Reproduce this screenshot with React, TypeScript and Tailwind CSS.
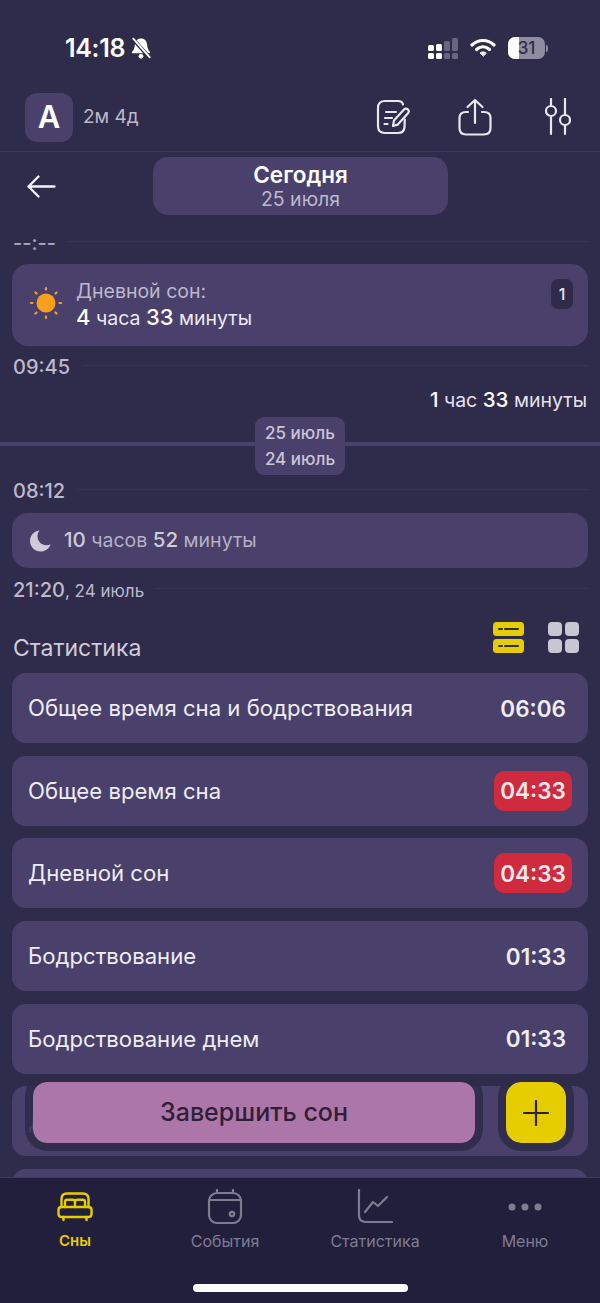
const stats = [
    { label: 'Общее время сна и бодрствования', value: '06:06', bad: false },
    { label: 'Общее время сна', value: '04:33', bad: true },
    { label: 'Дневной сон', value: '04:33', bad: true },
    { label: 'Бодрствование', value: '01:33', bad: false },
    { label: 'Бодрствование днем', value: '01:33', bad: false },
    { label: 'Дневная активность', value: '01:33', bad: false },
    { label: 'Ночной сон', value: '10:52', bad: false },
];

function TimeMark({ children, gap = 'ml-3' }: { children: React.ReactNode; gap?: string }) {
    return (
        <div className="flex items-center h-[22px] pl-[13px] pr-3">
            <span className="text-[20px] leading-[22px] font-medium text-[#bdb9cc] whitespace-nowrap">{children}</span>
            <div className={`flex-1 h-px mb-[3px] bg-[#383356] ${gap}`} />
        </div>
    );
}

function StatusBar() {
    return (
        <div className="h-[92px] shrink-0 flex items-center justify-between pl-[65px] pr-[52px] pt-[4px] text-white">
            <div className="flex items-center gap-[4px]">
                <span className="text-[25px] font-semibold leading-none tracking-[-0.3px]">14:18</span>
                <svg width="24" height="24" viewBox="0 0 22 22" fill="white">
                    <path d="M11 2.2c-3.4 0-5.3 2.5-5.6 5.600-.3 3.400-1 5-2.600 6.700-.5.6-.1 1.400.6 1.400h15.200c.7 0 1.100-.8.6-1.400-1.600-1.700-2.300-3.300-2.600-6.700-.3-3.100-2.200-5.600-5.600-5.600z" />
                    <circle cx="11" cy="18.600" r="2.200" />
                    <path d="M3 2l16 18" stroke="#2f2b4a" strokeWidth="3.500" />
                    <path d="M3.500 2l16 18" stroke="white" strokeWidth="1.800" />
                </svg>
            </div>
            <div className="flex items-center gap-[12px]">
                <svg width="30" height="24" viewBox="0 0 30 24">
                    <g fill="white">
                        <rect x="0" y="9" width="6" height="6" rx="1.500" />
                        <rect x="0" y="17" width="6" height="6" rx="1.500" />
                        <rect x="8" y="8" width="6" height="7" rx="1.500" />
                        <rect x="8" y="17" width="6" height="6" rx="1.500" />
                    </g>
                    <g fill="#6a6680">
                        <rect x="16" y="5" width="6" height="10" rx="1.500" />
                        <rect x="16" y="17" width="6" height="6" rx="1.500" />
                        <rect x="24" y="2" width="6" height="13" rx="1.500" />
                        <rect x="24" y="17" width="6" height="6" rx="1.500" />
                    </g>
                </svg>
                <svg width="26" height="20" viewBox="0 0 26 20" fill="none" stroke="white" strokeWidth="3.200" strokeLinecap="round">
                    <path d="M2 7c6.500-6 15.500-6 22 0" />
                    <path d="M6.500 11.500c4-3.600 9-3.600 13 0" />
                    <path d="M13 18l-3-3c1.800-1.500 4.200-1.500 6 0z" fill="white" strokeWidth="1" />
                </svg>
                <div className="flex items-center gap-[1px]">
                    <div className="relative w-[37px] h-[22px] rounded-[7px] bg-[#8f8ba0] overflow-hidden flex items-center justify-center">
                        <div className="absolute left-0 top-0 bottom-0 w-[11px] bg-white" />
                        <span className="relative text-[17px] leading-none font-medium text-[#2f2b4a]">31</span>
                    </div>
                    <div className="w-[2px] h-[7px] rounded-r bg-[#8f8ba0]" />
                </div>
            </div>
        </div>
    );
}

function Header() {
    return (
        <div className="h-[60px] shrink-0 flex items-start justify-between pl-[25px] pr-[29px] border-b border-[#3e3a5c]">
            <div className="flex items-center gap-[10px] mt-px">
                <div className="w-[48px] h-[49px] rounded-[12px] bg-[#49406b] flex items-center justify-center text-white text-[31px] font-semibold">A</div>
                <span className="text-[#bdb9cc] text-[19px]">2м 4д</span>
            </div>
            <div className="flex items-center pt-[6px]">
                <svg width="34" height="36" viewBox="0 0 34 36" fill="none" stroke="#e8e6ef" strokeWidth="2.200" strokeLinecap="round" strokeLinejoin="round">
                    <path d="M27 5.500C26.500 3 25 2 22 2H9C4.500 2 2 4.500 2 9v18c0 4.500 2.500 7 7 7h13c4 0 6-2 6.500-5.500l.3-8" />
                    <path d="M10 13h10M9 19h7M8.500 25h3" />
                    <path d="M17 27l1-5.500L28 10.500c1.200-1.300 2.800-1.300 4 0 1 1.100 1 2.500 0 3.700L21.800 25.600z" />
                </svg>
                <svg className="ml-[48px]" width="34" height="38" viewBox="0 0 34 38" fill="none" stroke="#e8e6ef" strokeWidth="2.200" strokeLinecap="round" strokeLinejoin="round">
                    <path d="M17 25V2M9.500 9L17 2l7.500 7" />
                    <path d="M10 14H8c-4 0-6.500 2-6.500 6v10c0 4 2.500 6.500 6.500 6.500h18c4 0 6.500-2.500 6.500-6.500V20c0-4-2.500-6-6.500-6h-2" />
                </svg>
                <svg className="ml-[53px]" width="26" height="38" viewBox="0 0 26 38" fill="none" stroke="#e8e6ef" strokeWidth="2.200" strokeLinecap="round">
                    <path d="M6 1v6M6 19v17M20 1v15M20 28v8" />
                    <circle cx="6" cy="13" r="5" />
                    <circle cx="20" cy="22" r="5" />
                </svg>
            </div>
        </div>
    );
}

function Timeline() {
    return (
        <div className="shrink-0">
            <div className="relative h-[82px] flex items-start">
                <svg className="ml-[27px] mt-[23px]" width="29" height="23" viewBox="0 0 29 23" fill="none" stroke="#f4f3f7" strokeWidth="2.400" strokeLinecap="round" strokeLinejoin="round">
                    <path d="M1.500 11.500h26M11.500 1.500L1.500 11.500l10 10" />
                </svg>
                <div className="ml-[97px] mt-[5px] w-[295px] h-[58px] rounded-[15px] bg-[#49406b] flex flex-col items-center justify-center">
                    <span className="text-white text-[22.500px] leading-[26px] font-semibold">Сегодня</span>
                    <span className="text-[#bdb9cc] text-[19.500px] leading-[22px]">25 июля</span>
                </div>
            </div>
            <div className="-mt-[2px]"><TimeMark gap="ml-[11px]"><span className="text-[#a9a5bb]">--:--</span></TimeMark></div>
            <div className="mx-3 mt-[10px] h-[82px] rounded-[16px] bg-[#49406b] flex items-start pl-[17px] pr-[15px] pt-[15px]">
                <svg className="mt-[7px]" width="34" height="34" viewBox="0 0 34 34" fill="none">
                    <circle cx="17" cy="17" r="9.500" fill="#f7a01e" />
                    <g stroke="#f7a01e" strokeWidth="2.200" strokeLinecap="round">
                        <path d="M17 2v1.500M17 30.500V32M2 17h1.500M30.500 17H32M6.500 6.500l1 1M26.500 26.500l1 1M6.500 27.500l1-1M26.500 7.500l1-1" />
                    </g>
                </svg>
                <div className="ml-[13px] flex-1">
                    <div className="text-[#bdb9cc] text-[19.500px] leading-[25px]">Дневной сон:</div>
                    <div className="text-[#ebe9f1] text-[19.500px] leading-[27px]">
                        <span className="text-[22px] font-medium text-white">4</span> часа <span className="text-[22px] font-medium text-white">33</span> минуты
                    </div>
                </div>
                <div className="w-[22px] h-[30px] rounded-[7px] bg-[#2f2b4a] flex items-center justify-center text-[#e8e6ef] text-[16px] font-medium">1</div>
            </div>
            <div className="mt-[10px]"><TimeMark>09:45</TimeMark></div>
            <div className="mt-[10px] pr-[13px] text-right text-[#e4e2ec] text-[19.500px] leading-[24px]">
                <span className="font-medium text-[20.500px] text-white">1</span> час <span className="font-medium text-[20.500px] text-white">33</span> минуты
            </div>
            <div className="relative mt-[5px] h-[58px] flex justify-center">
                <div className="absolute left-0 right-0 top-[25px] h-[4px] bg-[#49406b]" />
                <div className="relative w-[90px] h-[58px] rounded-[9px] bg-[#49406b] flex flex-col items-center justify-center text-[#c9c5d6] text-[17px] leading-[26px] font-medium">
                    <span>25 июль</span>
                    <span>24 июль</span>
                </div>
            </div>
            <div className="mt-[5px]"><TimeMark>08:12</TimeMark></div>
            <div className="mx-3 mt-[11px] h-[55px] rounded-[16px] bg-[#49406b] flex items-center pl-[18px]">
                <svg width="21" height="22" viewBox="0 0 21 22" fill="#cfccda">
                    <path d="M9 .5C3.800 1.300 0 5.700 0 11c0 5.800 4.800 10.500 10.600 10.500 4.700 0 8.700-3 10-7.300-1.300.7-2.600 1-4.100 1-5 0-9-4-9-9 0-2.200 .7-4.200 2-5.700z" />
                </svg>
                <span className="ml-[13px] text-[#b5b1c6] text-[19.500px]">
                    <span className="font-medium text-[20.500px] text-[#cfccda]">10</span> часов <span className="font-medium text-[20.500px] text-[#cfccda]">52</span> минуты
                </span>
            </div>
            <div className="mt-[11px]">
                <TimeMark gap="ml-[10px]">21:20<span className="font-normal text-[17px]">, 24 июль</span></TimeMark>
            </div>
        </div>
    );
}

function StatsHead() {
    return (
        <div className="shrink-0 mt-[20px] h-[41px] flex items-end justify-between pl-[13px] pr-[21px]">
            <span className="text-[#cfccda] text-[23px] leading-[26px] mb-[1px]">Статистика</span>
            <div className="flex items-center gap-[24px] mb-[9px]">
                <svg width="31" height="31" viewBox="0 0 31 31">
                    <rect width="31" height="14" rx="3.500" fill="#e6cd00" />
                    <rect y="17" width="31" height="14" rx="3.500" fill="#e6cd00" />
                    <path d="M6 7h3M12 7h13M6 24h3M12 24h13" stroke="#2f2b4a" strokeWidth="2" strokeLinecap="round" />
                </svg>
                <svg width="31" height="31" viewBox="0 0 31 31" fill="#c9c6d4">
                    <rect width="14" height="14" rx="4" />
                    <rect x="17" width="14" height="14" rx="4" />
                    <rect y="17" width="14" height="14" rx="4" />
                    <rect x="17" y="17" width="14" height="14" rx="4" />
                </svg>
            </div>
        </div>
    );
}

function TabBar() {
    const itemCls = 'flex-1 flex flex-col items-center text-[#7f7c92] text-[16px] leading-[18px]';
    return (
        <div className="absolute left-0 right-0 bottom-0 h-[126px] bg-[#211f3c] border-t border-[#3e3a5c]">
            <div className="flex pt-[11px]">
                <div className="w-[150px] flex flex-col items-center text-[#e6cd00] text-[15px] leading-[18px] font-semibold">
                    <svg width="36" height="36" viewBox="0 0 36 36" fill="none" stroke="#e6cd00" strokeWidth="2.400" strokeLinecap="round" strokeLinejoin="round">
                        <path d="M4.500 18V10c0-3.500 2-5.500 5.500-5.500h16c3.500 0 5.500 2 5.500 5.500v8" />
                        <path d="M4.500 18h27c1.800 0 3 1.200 3 3v4c0 1.800-1.200 3-3 3h-27c-1.800 0-3-1.200-3-3v-4c0-1.800 1.200-3 3-3z" />
                        <path d="M8 18v-5c0-1.300 .8-2.200 2.200-2.200h5.600c1.400 0 2.200 .9 2.200 2.200v5M18 13c0-1.300 .8-2.200 2.200-2.200h5.600c1.400 0 2.200 .9 2.200 2.200v5M6.500 28v3M29.500 28v3" />
                    </svg>
                    <span className="mt-[7px]">Сны</span>
                </div>
                <div className={itemCls}>
                    <svg width="36" height="36" viewBox="0 0 36 36" fill="none" stroke="#7f7c92" strokeWidth="2.200" strokeLinecap="round">
                        <rect x="2" y="4" width="32" height="30" rx="8" />
                        <path d="M2 11h32M10 1v3M26 1v3" />
                        <circle cx="25" cy="25" r="2.200" />
                    </svg>
                    <span className="mt-[7px]">События</span>
                </div>
                <div className={itemCls}>
                    <svg width="36" height="36" viewBox="0 0 36 36" fill="none" stroke="#7f7c92" strokeWidth="2.200" strokeLinecap="round" strokeLinejoin="round">
                        <path d="M2 1v25c0 4.500 2.500 7 7 7h26" />
                        <path d="M8 23l8-10 5 4 9-9" />
                    </svg>
                    <span className="mt-[7px]">Статистика</span>
                </div>
                <div className="w-[150px] flex flex-col items-center text-[#7f7c92] text-[16px] leading-[18px]">
                    <svg width="36" height="36" viewBox="0 0 36 36" fill="#7f7c92">
                        <circle cx="5" cy="18" r="3.500" />
                        <circle cx="18" cy="18" r="3.500" />
                        <circle cx="31" cy="18" r="3.500" />
                    </svg>
                    <span className="mt-[7px]">Меню</span>
                </div>
            </div>
            <div className="absolute left-[193px] bottom-[11px] w-[215px] h-[8px] rounded-full bg-white" />
        </div>
    );
}

export default function App() {
    return (
        <div className="relative w-[600px] h-[1303px] overflow-hidden bg-[#2f2b4a] font-['Inter',sans-serif] flex flex-col">
            <StatusBar />
            <Header />
            <Timeline />
            <StatsHead />
            <div className="flex flex-col gap-[12.700px] px-3 mt-[11px] shrink-0">
                {stats.map((s) => (
                    <div key={s.label} className="h-[70px] shrink-0 rounded-[14px] bg-[#49406b] flex items-center justify-between pl-4 pr-[22px] pt-px">
                        <span className="text-[#efedf4] text-[22.150px]">{s.label}</span>
                        {s.bad ? (
                            <span className="-mr-[6px] -mt-px w-[78px] h-[40px] rounded-[10px] bg-[#d02a3e] flex items-center justify-center text-[#f6e9ec] text-[22.500px] font-semibold">{s.value}</span>
                        ) : (
                            <span className="text-[#efedf4] text-[22.500px] font-semibold">{s.value}</span>
                        )}
                    </div>
                ))}
            </div>

            {/* floating actions */}
            <div className="absolute left-[25px] top-[1074px] w-[549px] flex justify-between">
                <div className="w-[458px] h-[77px] rounded-[22px] border-[8px] border-[#2f2b4a]/90 bg-[#ad76a8] bg-clip-padding flex items-center justify-center text-[#2f2037] text-[25px] font-medium">
                    Завершить сон
                </div>
                <div className="w-[76px] h-[77px] rounded-[23px] border-[8px] border-[#2f2b4a]/90 bg-[#e6cd00] bg-clip-padding flex items-center justify-center">
                    <svg width="26" height="26" viewBox="0 0 26 26" stroke="#2f2037" strokeWidth="2.200" strokeLinecap="round">
                        <path d="M13 1v24M1 13h24" />
                    </svg>
                </div>
            </div>
            <TabBar />
        </div>
    );
}
